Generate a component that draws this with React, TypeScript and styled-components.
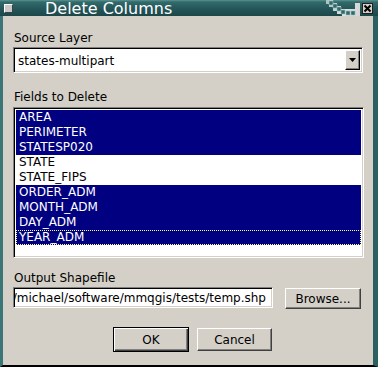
import React, { FC } from 'react';
import styled, { createGlobalStyle, css } from 'styled-components';

const GlobalStyle = createGlobalStyle`
	html, body {
		margin: 0;
		padding: 0;
		background: #d4d0c8;
	}
	* {
		box-sizing: border-box;
	}
`;

const Frame = styled.div`
	width: 378px;
	height: 367px;
	display: flex;
	flex-direction: column;
	font-family: 'DejaVu Sans', Verdana, sans-serif;
	font-size: 12px;
	color: #000;
	overflow: hidden;
`;

const TitleBar = styled.div`
	height: 16px;
	flex: none;
	display: flex;
	align-items: center;
	background: linear-gradient(to bottom, #5b9393 0px, #326a6a 2px, #24555a 9px, #1d4747 16px);
	padding: 0 5px 0 4px;
`;

const MenuBox = styled.div`
	width: 9px;
	height: 9px;
	background: #c8c8c8;
	border: 1px solid;
	border-color: #ffffff #404040 #404040 #ffffff;
`;

const Title = styled.span`
	margin-left: 32px;
	color: #ffffff;
	font-size: 16px;
	line-height: 16px;
	padding-top: 2px;
	white-space: nowrap;
`;

const Decor = styled.svg`
	margin-left: auto;
	flex: none;
	align-self: stretch;
`;

const CloseBox = styled.div`
	width: 11px;
	height: 11px;
	margin-left: 2px;
	background: #d4d0c8;
	border: 1px solid #202020;
	display: flex;
	align-items: center;
	justify-content: center;
`;

const Client = styled.div`
	flex: 1;
	display: flex;
	flex-direction: column;
	background: #d4d0c8;
	border-left: 3px solid #3b7676;
	border-right: 5px solid #2c6060;
	border-bottom: 2px solid #000000;
	padding: 15px 10px 0 10px;
`;

const Label = styled.div<{ $gap?: number }>`
	height: 15px;
	line-height: 15px;
	padding-left: 1px;
	margin-top: ${p => p.$gap ?? 0}px;
	white-space: nowrap;
`;

const sunken = css`
	border: 1px solid;
	border-color: #808080 #ffffff #ffffff #808080;
	box-shadow: inset 1px 1px 0 #000000, inset -1px -1px 0 #d4d0c8;
	background: #ffffff;
`;

const Combo = styled.div`
	${sunken};
	margin-top: 1px;
	height: 26px;
	width: 350px;
	display: flex;
	align-items: stretch;
	padding: 2px;
`;

const ComboText = styled.div`
	flex: 1;
	padding-left: 2px;
	line-height: 22px;
	white-space: nowrap;
`;

const DropButton = styled.div`
	width: 15px;
	background: #d4d0c8;
	border: 1px solid;
	border-color: #ffffff #000000 #000000 #ffffff;
	box-shadow: inset -1px -1px 0 #808080;
	display: flex;
	align-items: center;
	justify-content: center;
`;

const ListBox = styled.div`
	${sunken};
	margin-top: 2px;
	width: 351px;
	height: 151px;
	padding: 2px;
	display: flex;
	flex-direction: column;
`;

const Item = styled.div<{ $selected: boolean; $focused: boolean }>`
	height: 15px;
	line-height: 15px;
	padding-left: 3px;
	white-space: nowrap;
	background: ${p => (p.$selected ? '#000080' : '#ffffff')};
	color: ${p => (p.$selected ? '#ffffff' : '#000000')};
	${p => p.$focused && css`
		outline: 1px dotted #ffffb0;
		outline-offset: -1px;
	`}
`;

const FileRow = styled.div`
	margin-top: 1px;
	display: flex;
	align-items: flex-start;
	gap: 12px;
`;

const PathField = styled.div`
	${sunken};
	width: 260px;
	height: 21px;
	padding: 2px 6px 2px 2px;
	display: flex;
	justify-content: flex-end;
	align-items: center;
	overflow: hidden;
	white-space: nowrap;
`;

const Button = styled.div<{ $default?: boolean; $width: number }>`
	width: ${p => p.$width}px;
	height: ${p => (p.$default ? 25 : 23)}px;
	display: flex;
	align-items: center;
	justify-content: center;
	background: #d4d0c8;
	border: 1px solid;
	border-color: #ffffff #404040 #404040 #ffffff;
	box-shadow: inset -1px -1px 0 #808080;
	${p => p.$default && css`
		border-color: #000000;
		box-shadow: inset 1px 1px 0 #ffffff, inset -1px -1px 0 #404040, inset -2px -2px 0 #808080;
	`}
`;

const BrowseButton = styled(Button)`
	margin-top: 1px;
	height: 21px;
`;

const ButtonRow = styled.div`
	margin-top: 18px;
	padding-left: 9px;
	display: flex;
	justify-content: center;
	align-items: center;
	gap: 8px;
`;

type Field = {
	name: string
	selected: boolean
}

const fields: Field[] = [
	{ name: 'AREA', selected: true },
	{ name: 'PERIMETER', selected: true },
	{ name: 'STATESP020', selected: true },
	{ name: 'STATE', selected: false },
	{ name: 'STATE_FIPS', selected: false },
	{ name: 'ORDER_ADM', selected: true },
	{ name: 'MONTH_ADM', selected: true },
	{ name: 'DAY_ADM', selected: true },
	{ name: 'YEAR_ADM', selected: true },
];

const squares: [number, number][] = [[3, 1], [7, 4], [11, 7], [15, 10], [20, 11], [25, 11]];

const TitleDecor: FC = () => (
	<Decor width="34" height="16" viewBox="0 0 34 16">
		<defs>
			<linearGradient id="dg" x1="0" y1="0" x2="1" y2="0">
				<stop offset="0" stopColor="#a9c2c2" />
				<stop offset="0.5" stopColor="#e4e4e4" />
				<stop offset="1" stopColor="#d6d6d6" />
			</linearGradient>
		</defs>
		<polygon
			points="0,0 7,0 7,3 11,3 11,6 15,6 15,9 29,9 29,3 34,3 34,16 16,16 16,14 11,14 11,11 7,11 7,7 3,7 3,4 0,4"
			fill="url(#dg)"
		/>
		{squares.map(([x, y]) => (
			<rect key={`${x}-${y}`} x={x} y={y} width="4" height="4" fill="#2f6b6b" stroke="#9dbcbc" strokeWidth="0.6" />
		))}
	</Decor>
);

const App: FC = () => {
	return (
		<Frame>
			<GlobalStyle />
			<TitleBar>
				<MenuBox />
				<Title>Delete Columns</Title>
				<TitleDecor />
				<CloseBox>
					<svg width="9" height="9" viewBox="0 0 9 9">
						<path d="M1.5 1.5 L7.5 7.5 M7.5 1.5 L1.5 7.5" stroke="#000" strokeWidth="2" />
					</svg>
				</CloseBox>
			</TitleBar>
			<Client>
				<Label>Source Layer</Label>
				<Combo>
					<ComboText>states-multipart</ComboText>
					<DropButton>
						<svg width="7" height="5" viewBox="0 0 7 5">
							<path d="M0 0 H7 L3.5 4 Z" fill="#000" />
						</svg>
					</DropButton>
				</Combo>
				<Label $gap={17}>Fields to Delete</Label>
				<ListBox>
					{fields.map((field, i) =>
						<Item key={field.name} $selected={field.selected} $focused={i === fields.length - 1}>
							{field.name}
						</Item>
					)}
				</ListBox>
				<Label $gap={13}>Output Shapefile</Label>
				<FileRow>
					<PathField>/michael/software/mmqgis/tests/temp.shp</PathField>
					<BrowseButton $width={76}>Browse...</BrowseButton>
				</FileRow>
				<ButtonRow>
					<Button $default $width={76}>OK</Button>
					<Button $width={75}>Cancel</Button>
				</ButtonRow>
			</Client>
		</Frame>
	);
};

export default App;
